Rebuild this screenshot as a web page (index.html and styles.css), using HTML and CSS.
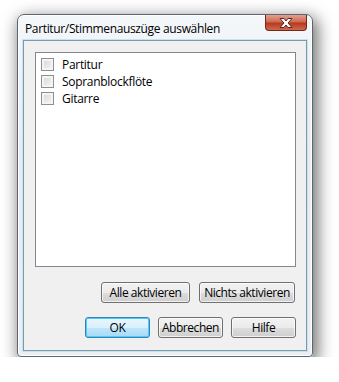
FILE: index.html
```html
<!DOCTYPE html>
<html lang="de">
<head>
    <meta charset="UTF-8">
    <title>Partitur/Stimmenauszüge auswählen</title>
    <link rel="stylesheet" href="styles.css">
</head>
<body>

    <div class="window">
        <div class="titlebar">
            <span class="title">Partitur/Stimmenauszüge auswählen</span>
            <div class="close">
                <svg width="18" height="12" viewBox="0 0 18 12">
                    <path d="M3 1.5h4l2 2.5 2-2.5h4l-4 4.5 4 4.5h-4l-2-2.5-2 2.5h-4l4-4.5z"
                          fill="#fff" stroke="#5a2a22" stroke-width="1" stroke-linejoin="round"/>
                </svg>
            </div>
        </div>

        <div class="client">
            <div class="list">
                <label class="item"><span class="check"></span>Partitur</label>
                <label class="item"><span class="check"></span>Sopranblockflöte</label>
                <label class="item"><span class="check"></span>Gitarre</label>
            </div>

            <div class="row row-select">
                <button class="btn btn-all">Alle aktivieren</button>
                <button class="btn btn-none">Nichts aktivieren</button>
            </div>

            <div class="row row-main">
                <button class="btn btn-default">OK</button>
                <button class="btn">Abbrechen</button>
                <button class="btn">Hilfe</button>
            </div>
        </div>
    </div>

</body>
</html>
```

FILE: styles.css
```css
body {
    margin: 0;
    background: #fff;
    font-family: "Open Sans", "Noto Sans", Arial, sans-serif;
    font-size: 12px;
    color: #000;
}
.window {
    box-sizing: border-box;
    width: 296px;
    height: 343px;
    margin: 14px 0 0 17px;
    border: 1px solid #5b6670;
    border-radius: 7px 7px 4px 4px;
    background: linear-gradient(#f4f7fa, #e7edf3 40%, #e9eff5);
    box-shadow: 3px 5px 16px 2px rgba(0, 0, 0, 0.55), inset 0 0 0 1px #ffffff;
    display: flex;
    flex-direction: column;
    padding: 0 5px 5px 5px;
}
.titlebar {
    height: 25px;
    display: flex;
    align-items: flex-start;
    justify-content: space-between;
}
.title {
    margin: 5px 0 0 2px;
    font-size: 12px;
    letter-spacing: -0.35px;
    color: #000;
}
.close {
    width: 42px;
    height: 16px;
    border: 1px solid #6b2a20;
    border-top: none;
    border-radius: 0 0 4px 4px;
    background: linear-gradient(#e3a08f, #cf6a54 45%, #b8391f 55%, #cf6a4c);
    display: flex;
    align-items: center;
    justify-content: center;
    box-sizing: border-box;
}
.close svg {
    display: block;
}
.client {
    flex: 1;
    border: 1px solid #8696a4;
    box-shadow: 0 0 0 1px #bfe6f7;
    background: #f0f0f0;
    padding: 11px 10px 0 11px;
    display: flex;
    flex-direction: column;
}
.list {
    height: 215px;
    box-sizing: border-box;
    border: 1px solid #828790;
    background: #fff;
    padding: 3px 0 0 5px;
}
.item {
    display: flex;
    align-items: center;
    height: 17px;
    line-height: 17px;
    letter-spacing: -0.3px;
}
.check {
    box-sizing: border-box;
    width: 13px;
    height: 13px;
    margin-right: 8px;
    border: 1px solid #8f8f8f;
    background: linear-gradient(135deg, #d6d6d6, #f6f6f6);
    box-shadow: inset 0 0 0 2px #f4f4f4;
}
.row {
    display: flex;
    justify-content: flex-end;
}
.row-select {
    margin-top: 15px;
    gap: 9px;
    padding-right: 1px;
}
.row-main {
    margin-top: 14px;
    gap: 8px;
}
.btn {
    box-sizing: border-box;
    height: 21px;
    width: 65px;
    padding: 0;
    font-family: inherit;
    font-size: 12px;
    letter-spacing: -0.45px;
    color: #000;
    border: 1px solid #707070;
    border-radius: 3px;
    background: linear-gradient(#f2f2f2, #ebebeb 50%, #dddddd 51%, #cfcfcf);
    box-shadow: inset 0 0 0 1px rgba(255, 255, 255, 0.7);
}
.btn-all {
    width: 89px;
}
.btn-none {
    width: 96px;
}
.btn-default {
    border-color: #3c7fb1;
    background: linear-gradient(#eaf6fd, #d9f0fc 50%, #bee6fd 51%, #a7d9f5);
    box-shadow: inset 0 0 0 1px #48cfff;
}
```
